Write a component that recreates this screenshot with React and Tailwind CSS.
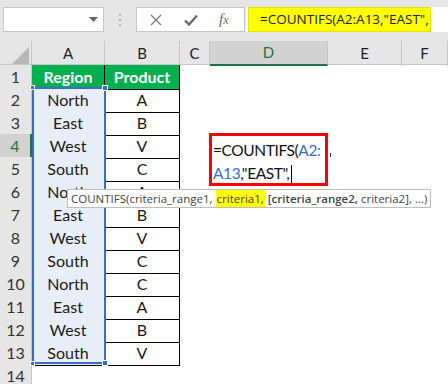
import React from 'react';

const rows = [
    ['Region', 'Product'],
    ['North', 'A'],
    ['East', 'B'],
    ['West', 'V'],
    ['South', 'C'],
    ['North', 'A'],
    ['East', 'B'],
    ['West', 'V'],
    ['South', 'C'],
    ['North', 'C'],
    ['East', 'A'],
    ['West', 'B'],
    ['South', 'V'],
];

const cols = ['A', 'B', 'C', 'D', 'E', 'F'];
const grid = "grid grid-cols-[32px_73px_75px_30px_118px_74px_1fr]";

function Toolbar() {
    return (
        <div className="flex items-start pt-[7px] h-[41px] bg-[#e6e6e6]">
            <div className="ml-[3px] w-[101px] h-[25px] bg-white border border-[#c6c6c6] flex items-center justify-end pr-[5px]">
                <svg width="9" height="5" viewBox="0 0 9 5"><path d="M0 0h9L4.5 5z" fill="#666" /></svg>
            </div>
            <div className="w-[32px] h-[25px] flex flex-col items-center justify-center gap-[3px]">
                <span className="w-[2px] h-[2px] bg-[#b0b0b0]" />
                <span className="w-[2px] h-[2px] bg-[#b0b0b0]" />
                <span className="w-[2px] h-[2px] bg-[#b0b0b0]" />
            </div>
            <div className="w-[109px] h-[25px] bg-white border border-[#c6c6c6] flex items-center">
                <svg className="ml-[13px]" width="12" height="12" viewBox="0 0 12 12">
                    <path d="M1 1l10 10M11 1L1 11" stroke="#7a7a7a" strokeWidth="1.3" />
                </svg>
                <svg className="ml-[22px]" width="14" height="12" viewBox="0 0 14 12">
                    <path d="M1 6.5l4 4L13 1.5" stroke="#6b6b6b" strokeWidth="2.4" fill="none" />
                </svg>
                <span className="ml-[21px] text-[15px] italic text-[#6b6b6b] font-['Liberation_Serif',serif] leading-none">f<span className="text-[12px]">x</span></span>
            </div>
            <div className="ml-[1px] flex-1 h-[25px] bg-white">
                <div className="ml-[2px] w-[183px] h-[25px] bg-[#ffff00] border border-[#e4e400] pl-[11px] flex items-center text-[13.5px] text-[#222] font-['Open_Sans',sans-serif] whitespace-nowrap">
                    =COUNTIFS(A2:A13,"EAST",
                </div>
            </div>
        </div>
    );
}

function ColumnHeaders() {
    return (
        <div className={`${grid} h-[24px] bg-[#e6e6e6] border-b border-[#c6c6c6]`}>
            <div className="border-r border-[#c6c6c6] flex items-end justify-end pr-[2px] pb-[2px]">
                <svg width="17" height="17" viewBox="0 0 17 17"><path d="M17 0v17H0z" fill="#b8b8b8" /></svg>
            </div>
            {cols.map((c) => (
                <div
                    key={c}
                    className={`flex items-center justify-center text-[15px] text-[#222] border-r border-[#c6c6c6] ${c === 'D' ? 'bg-[#d2d2d2] border-b-2 border-b-[#217346] text-[#217346]' : ''}`}
                >
                    {c}
                </div>
            ))}
        </div>
    );
}

function App() {
    return (
        <div className="w-[448px] h-[384px] overflow-hidden bg-white font-['Lato',sans-serif]">
            <Toolbar />
            <ColumnHeaders />
            <div className="relative">
                {rows.concat([['', '']]).map((r, i) => {
                    const n = i + 1;
                    const inTable = n <= 13;
                    const active = n === 4;
                    return (
                        <div key={n} className={`${grid} h-[23px]`}>
                            <div className={`flex items-center justify-center text-[16px] border-b border-[#c6c6c6] ${active ? 'bg-[#d2d2d2] text-[#217346] border-r-2 border-r-[#217346]' : 'bg-[#e6e6e6] text-[#333] border-r border-[#c6c6c6]'}`}>
                                {n}
                            </div>
                            {inTable ? (
                                <>
                                    <div className={`flex items-center justify-center text-[16px] border-r border-b border-black ${n === 1 ? 'bg-[#00b050] text-white font-bold' : 'bg-[#e8eef8] text-[#1a1a1a]'}`}>
                                        {r[0]}
                                    </div>
                                    <div className={`flex items-center justify-center text-[16px] border-r border-b border-black ${n === 1 ? 'bg-[#00b050] text-white font-bold' : 'text-[#1a1a1a]'}`}>
                                        {r[1]}
                                    </div>
                                </>
                            ) : (
                                <>
                                    <div />
                                    <div />
                                </>
                            )}
                            <div />
                            <div />
                            <div />
                            <div />
                        </div>
                    );
                })}

                {/* formula range highlight A2:A13 */}
                <div className="absolute left-[32px] top-[22px] w-[74px] h-[277px] border-2 border-[#3a6cc6]">
                    <span className="absolute -left-[4px] -top-[4px] w-[5px] h-[5px] bg-[#3a6cc6] border border-white" />
                    <span className="absolute -right-[4px] -top-[4px] w-[6px] h-[6px] bg-[#3a6cc6] border border-white" />
                    <span className="absolute -left-[4px] -bottom-[4px] w-[5px] h-[5px] bg-[#3a6cc6] border border-white" />
                    <span className="absolute -right-[4px] -bottom-[4px] w-[6px] h-[6px] bg-[#3a6cc6] border border-white" />
                </div>

                {/* cell being edited */}
                <div className="absolute left-[209px] top-[68px] w-[119px] h-[53px] bg-white border-[3px] border-[#ff0000] pl-px pt-[3px] text-[15.5px] leading-[23px] text-[#111] whitespace-nowrap tracking-[-0.4px]">
                    <div>=COUNTIFS(<span className="text-[#3a6cc6]">A2:</span></div>
                    <div className="flex items-center">
                        <span className="text-[#3a6cc6]">A13</span>,"EAST",
                        <span className="ml-[2px] w-px h-[18px] bg-black" />
                    </div>
                </div>
                <span className="absolute left-[330px] top-[88px] w-px h-[4px] bg-[#333]" />

                {/* function tooltip */}
                <div className="absolute left-[67px] top-[124px] h-[19px] bg-white border border-[#bdbdbd] px-[3px] flex items-center text-[11.5px] text-[#444] font-['Open_Sans',sans-serif] whitespace-nowrap">
                    COUNTIFS(criteria_range1,
                    <span className="ml-[3px] bg-[#ffff00] px-[1px]">criteria1,</span>
                    <span className="ml-[3px] font-semibold">[criteria_range2,</span>
                    <span className="ml-[3px]">criteria2], ...)</span>
                </div>
            </div>
        </div>
    );
}

export default App;
